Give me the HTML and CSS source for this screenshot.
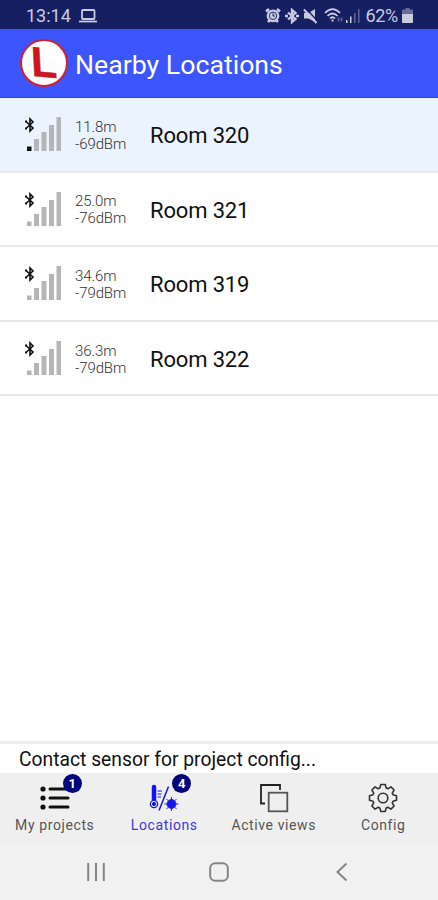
FILE: index.html
```html
<!DOCTYPE html>
<html lang="en">
<head>
  <meta charset="UTF-8" />
  <meta name="viewport" content="width=device-width, initial-scale=1.0"/>
  <title>Nearby Locations</title>
  <link rel="stylesheet" href="styles.css">
</head>
<body>

  <!-- Shared icons -->
  <svg class="sprite">
    <symbol id="bluetooth" viewBox="0 0 10 16">
      <path d="M1.500 5L8 11 5 14V2L8 5 1.500 11" fill="none" stroke="currentColor" stroke-width="1.600"/>
      <path d="M0 3.500h2v2H0zM0 10.500h2v2H0z" fill="currentColor"/>
    </symbol>
    <symbol id="bars" viewBox="0 0 34 34">
      <path d="M7 22h5v12H7zM14.500 15h5v19h-5zM22 8h5v26h-5zM29.500 0h4.500v34h-4.500z" fill="#b5b5b5"/>
      <path class="bar-low" d="M0 29.500h4.500V34H0z"/>
    </symbol>
  </svg>

  <div class="status-bar">
    <span class="clock">13:14</span>
    <svg class="laptop" width="18" height="14" viewBox="0 0 18 14" fill="none" stroke="currentColor" stroke-width="1.800">
      <rect x="3" y="1" width="12.500" height="9" rx="1"/>
      <path d="M0 12.500h18"/>
    </svg>
    <div class="status-icons">
      <svg width="16" height="15" viewBox="0 0 16 15">
        <path d="M1 3.500L4 1M15 3.500L12 1M3 14l2-2M13 14l-2-2" stroke="currentColor" stroke-width="2.500"/>
        <circle cx="8" cy="7.800" r="6.400" fill="currentColor"/>
        <circle cx="8" cy="7.800" r="3.700" fill="none" stroke="#171f63" stroke-width=".9"/>
        <path d="M8 5.500V8h2" fill="none" stroke="#171f63"/>
      </svg>
      <svg class="status-bt" width="14" height="16" viewBox="0 0 14 16">
        <path d="M3 4.500L10.500 11 7 14V2L10.500 5 3 11.500" fill="none" stroke="currentColor" stroke-width="2.300"/>
        <path d="M0 6.800h3v2.400H0zM11 6.800h3v2.400h-3z" fill="currentColor"/>
      </svg>
      <svg class="status-mute" width="15" height="16" viewBox="0 0 15 16">
        <path d="M1 5h4.500L12 1v13l-6.500-3.500H1z" fill="currentColor"/>
        <path d="M3 .5l12 13" stroke="#171f63" stroke-width="1.400"/>
        <path d="M1 1.500L13.500 15" stroke="currentColor" stroke-width="2"/>
      </svg>
      <svg class="status-wifi" width="19" height="15" viewBox="0 0 19 15" fill="none" stroke="currentColor" stroke-width="1.700">
        <path d="M1 5Q8.500-2.500 16 5M3.500 8q5-5 10 0M6 10.500q2.500-2.500 5 0"/>
        <path d="M7.500 12.500h2" stroke-width="2"/>
        <path d="M14.500 13.500v-4M17.500 9.500v4" opacity=".4"/>
      </svg>
      <svg class="status-cell" width="14" height="14" viewBox="0 0 14 14">
        <path d="M0 11h1.500v3H0zM4 7.500h1.500V14H4z" fill="currentColor"/>
        <path d="M8 4h1.500v10H8zM12 0h1.500v14H12z" fill="currentColor" opacity=".4"/>
      </svg>
      <span class="battery-text">62%</span>
      <svg class="battery" width="11" height="15" viewBox="0 0 11 15">
        <path d="M3.500 0h4v1.500H10a1 1 0 0 1 1 1V6H0V2.500a1 1 0 0 1 1-1h2.500z" fill="currentColor" opacity=".45"/>
        <path d="M0 6h11v8a1 1 0 0 1-1 1H1a1 1 0 0 1-1-1z" fill="currentColor"/>
      </svg>
    </div>
  </div>

  <header class="header">
    <div class="logo"><span class="logo-letter">L</span></div>
    <h1>Nearby Locations</h1>
  </header>

  <main class="locations">
    <div class="location selected">
      <div class="signal">
        <svg class="signal-bt"><use href="#bluetooth"/></svg>
        <svg class="signal-bars"><use href="#bars"/></svg>
      </div>
      <div class="reading"><div>11.8m</div><div>-69dBm</div></div>
      <div class="name">Room 320</div>
    </div>
    <div class="location">
      <div class="signal">
        <svg class="signal-bt"><use href="#bluetooth"/></svg>
        <svg class="signal-bars"><use href="#bars"/></svg>
      </div>
      <div class="reading"><div>25.0m</div><div>-76dBm</div></div>
      <div class="name">Room 321</div>
    </div>
    <div class="location">
      <div class="signal">
        <svg class="signal-bt"><use href="#bluetooth"/></svg>
        <svg class="signal-bars"><use href="#bars"/></svg>
      </div>
      <div class="reading"><div>34.6m</div><div>-79dBm</div></div>
      <div class="name">Room 319</div>
    </div>
    <div class="location">
      <div class="signal">
        <svg class="signal-bt"><use href="#bluetooth"/></svg>
        <svg class="signal-bars"><use href="#bars"/></svg>
      </div>
      <div class="reading"><div>36.3m</div><div>-79dBm</div></div>
      <div class="name">Room 322</div>
    </div>
  </main>

  <div class="message">Contact sensor for project config...</div>

  <nav class="tabs">
    <div class="tab">
      <div class="tab-icon">
        <svg width="30" height="26" viewBox="0 0 30 26">
          <g fill="#111"><circle cx="3" cy="4" r="2.600"/><circle cx="3" cy="13" r="2.600"/><circle cx="3" cy="22" r="2.600"/></g>
          <path d="M10 4h18M10 13h18M10 22h18" stroke="#111" stroke-width="3" stroke-linecap="round"/>
        </svg>
        <span class="badge">1</span>
      </div>
      <span class="tab-label">My projects</span>
    </div>
    <div class="tab active">
      <div class="tab-icon">
        <svg width="30" height="28" viewBox="0 0 30 28" fill="none" stroke="#1414ee">
          <path d="M3.500 16V3a1.500 1.500 0 0 1 3 0v13" fill="#1414ee" stroke-width="1.500"/>
          <circle cx="5" cy="20" r="3.600" stroke-width="1.300"/>
          <circle cx="5" cy="20" r="1.600" fill="#1414ee"/>
          <path d="M8.500 7H13M8.500 10h4M8.500 13H12" stroke-width="1.200"/>
          <path d="M19.500 2.500L10 26.500" stroke-width="1.500"/>
          <circle cx="22.500" cy="20" r="4.400" fill="#1414ee"/>
          <path d="M22.500 13v14M15.500 20h14M17.500 15l10 10M27.500 15l-10 10" stroke-width=".9"/>
        </svg>
        <span class="badge">4</span>
      </div>
      <span class="tab-label">Locations</span>
    </div>
    <div class="tab">
      <div class="tab-icon">
        <svg width="30" height="30" viewBox="0 0 30 30" fill="none">
          <path d="M6 20.500H2V2h19v5" stroke="#222" stroke-width="1.800"/>
          <rect x="9.700" y="9.700" width="18.600" height="18.600" stroke="#555" stroke-width="1.800"/>
        </svg>
      </div>
      <span class="tab-label">Active views</span>
    </div>
    <div class="tab">
      <div class="tab-icon">
        <svg width="30" height="30" viewBox="-15 -15 30 30" fill="none" stroke="#333" stroke-width="1.600" stroke-linejoin="round">
          <path d="M-3.200-10L-2.200-13.500H2.200L3.200-10 4.800-9.300 8-11.100 11.100-8 9.300-4.800 10-3.200 13.500-2.200V2.200L10 3.200 9.300 4.800 11.100 8 8 11.100 4.800 9.300 3.200 10 2.200 13.500H-2.200L-3.200 10-4.800 9.300-8 11.100-11.100 8-9.300 4.800-10 3.200-13.500 2.200V-2.200L-10-3.200-9.300-4.800-11.100-8-8-11.100-4.800-9.300z"/>
          <circle r="4.800"/>
        </svg>
      </div>
      <span class="tab-label">Config</span>
    </div>
  </nav>

  <!-- Android navigation -->
  <div class="system-nav">
    <svg width="18" height="18" viewBox="0 0 18 18"><path d="M1.200 0v18M9 0v18M16.800 0v18" stroke="#858585" stroke-width="2"/></svg>
    <svg width="20" height="20" viewBox="0 0 20 20"><rect x="1.200" y="1.200" width="17.600" height="17.600" rx="5" fill="none" stroke="#858585" stroke-width="2"/></svg>
    <svg width="18" height="18" viewBox="0 0 18 18"><path d="M13.500 0.500L4.500 9l9 8.500" fill="none" stroke="#858585" stroke-width="2"/></svg>
  </div>

</body>
</html>
```
FILE: styles.css
```css
* {
  box-sizing: border-box;
}

body {
  margin: 0;
  height: 900px;
  display: flex;
  flex-direction: column;
  background-color: #fff;
  color: #111;
  font-family: Roboto, sans-serif;
  overflow: hidden;
}

svg {
  display: block;
  flex: none;
}

.sprite {
  display: none;
}

.status-bar {
  height: 29px;
  flex: none;
  display: flex;
  align-items: center;
  padding: 2px 25px 0 26px;
  background-color: #171f63;
  color: #c9cce0;
  font-size: 18px;
}

.laptop {
  margin-left: 8px;
}

.status-icons {
  display: flex;
  align-items: center;
  margin-left: auto;
}

.status-bt {
  margin-left: 4px;
}

.status-mute {
  margin-left: 4px;
}

.status-wifi {
  margin-left: 6px;
}

.status-cell {
  margin-left: 3px;
}

.battery-text {
  margin-left: 5px;
  letter-spacing: -0.3px;
}

.battery {
  margin-left: 4px;
}

.header {
  height: 69px;
  flex: none;
  display: flex;
  align-items: center;
  padding: 0 20px;
  background-color: #3c55fd;
  border-bottom: 1px solid #3043e4;
  color: #fff;
}

.logo {
  width: 48px;
  height: 48px;
  display: flex;
  align-items: center;
  justify-content: center;
  border: 2px solid #d3202f;
  border-radius: 50%;
  background-color: #fff;
  color: #cb1620;
}

.logo-letter {
  font-family: "Liberation Sans", sans-serif;
  font-size: 42px;
  font-weight: bold;
  line-height: 44px;
  transform: rotate(-3deg) skewY(8deg);
  -webkit-text-stroke: 0.5px #cb1620;
}

h1 {
  margin: 4px 0 0 7px;
  font-size: 26.7px;
  font-weight: 400;
  line-height: 32px;
}

.locations {
  flex: 1;
}

.location {
  height: 74.6px;
  display: flex;
  align-items: center;
  padding-left: 25px;
  border-bottom: 2px solid #e9e9e9;
}

.selected {
  background-color: #ebf3ff;
}

.signal {
  position: relative;
  width: 50px;
  height: 34px;
}

.signal-bt {
  position: absolute;
  top: 0;
  left: 0;
  width: 10px;
  height: 16px;
}

.signal-bars {
  width: 34px;
  height: 34px;
  margin-left: 2px;
  color: #b5b5b5;
  fill: currentColor;
}

.selected .signal-bars {
  color: #111;
}

.reading {
  width: 75px;
  padding-top: 3px;
  font-size: 15px;
  font-weight: 300;
  line-height: 17px;
  letter-spacing: -0.1px;
  color: #333;
}

.name {
  padding-top: 3px;
  font-size: 22px;
  letter-spacing: -0.15px;
}

.message {
  height: 32px;
  flex: none;
  padding: 2px 19px 0;
  border-top: 3px solid #ededed;
  font-size: 19.3px;
  line-height: 27px;
}

.tabs {
  height: 70px;
  flex: none;
  display: grid;
  grid-template-columns: repeat(4, 1fr);
  background-color: #efefef;
}

.tab {
  display: flex;
  flex-direction: column;
  align-items: center;
  padding-top: 10px;
  color: #555;
}

.active {
  color: #3f35e0;
}

.tab-icon {
  position: relative;
  width: 30px;
  height: 30px;
  display: flex;
  align-items: center;
}

.badge {
  position: absolute;
  top: -9px;
  left: 23px;
  width: 19px;
  height: 19px;
  border-radius: 50%;
  background-color: #00007c;
  color: #fff;
  font-size: 13px;
  font-weight: bold;
  line-height: 19px;
  text-align: center;
}

.tab-label {
  margin-top: 4px;
  font-size: 14px;
  line-height: 16px;
  letter-spacing: 0.6px;
}

.system-nav {
  height: 57px;
  flex: none;
  display: flex;
  align-items: center;
  justify-content: space-between;
  padding: 0 87px;
  background-color: #f1f1f1;
}
```
